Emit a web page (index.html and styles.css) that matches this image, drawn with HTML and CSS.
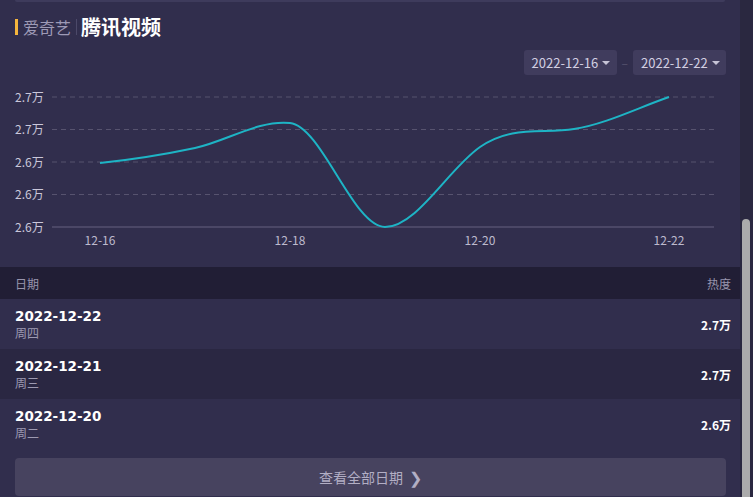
FILE: index.html
```html
<!DOCTYPE html>
<html lang="zh">
<head>
<meta charset="utf-8">
<link rel="stylesheet" href="styles.css">
</head>
<body>
<div class="page">
  <div class="main">
    <div class="prev-card"></div>
    <div class="title">
      <span class="mark"></span>
      <span class="tab">爱奇艺</span>
      <span class="sep"></span>
      <span class="tab active">腾讯视频</span>
    </div>
    <div class="pickers">
      <div class="picker">2022-12-16<span class="caret"></span></div>
      <span class="dash">–</span>
      <div class="picker">2022-12-22<span class="caret"></span></div>
    </div>
    <svg class="chart" width="740" height="192" viewBox="0 75 740 192">
      <g class="grid">
        <line x1="52" y1="97" x2="714" y2="97"/>
        <line x1="52" y1="129.5" x2="714" y2="129.5"/>
        <line x1="52" y1="162" x2="714" y2="162"/>
        <line x1="52" y1="194.5" x2="714" y2="194.5"/>
      </g>
      <line class="axis" x1="52" y1="227" x2="714" y2="227"/>
      <g class="ylab">
        <text x="15" y="101.5">2.7万</text>
        <text x="15" y="134">2.7万</text>
        <text x="15" y="166.5">2.6万</text>
        <text x="15" y="199">2.6万</text>
        <text x="15" y="231.5">2.6万</text>
      </g>
      <g class="xlab">
        <text x="100" y="245">12-16</text>
        <text x="290" y="245">12-18</text>
        <text x="480" y="245">12-20</text>
        <text x="669" y="245">12-22</text>
      </g>
      <path class="line" d="M100,163 C131.7,159.7 163.3,154.7 195,148 C226.7,141.3 258.3,119.7 290,123 C321.7,126.3 353.3,227 385,227 C416.7,227 448.3,169 480,147 C511.7,125 542.3,134 574,129 C605.7,124 637.3,108 669,97"/>
    </svg>
    <div class="table">
      <div class="thead">
        <span>日期</span>
        <span>热度</span>
      </div>
      <div class="row">
        <div class="date"><div class="d">2022-12-22</div><div class="w">周四</div></div>
        <div class="val">2.7万</div>
      </div>
      <div class="row alt">
        <div class="date"><div class="d">2022-12-21</div><div class="w">周三</div></div>
        <div class="val">2.7万</div>
      </div>
      <div class="row">
        <div class="date"><div class="d">2022-12-20</div><div class="w">周二</div></div>
        <div class="val">2.6万</div>
      </div>
    </div>
    <div class="more">查看全部日期 <span class="chev">❯</span></div>
  </div>
  <div class="scrollbar"><div class="thumb"></div></div>
</div>
</body>
</html>
```
FILE: styles.css
```css
* { box-sizing: border-box; }
html, body {
  margin: 0;
  padding: 0;
  background: #312e4d;
  overflow: hidden;
}
body {
  font-family: "Noto Sans CJK SC", "Noto Sans", sans-serif;
  color: #ffffff;
}
.page {
  display: flex;
  width: 753px;
  height: 497px;
  overflow: hidden;
}
.main {
  width: 740px;
  flex: none;
}
.prev-card {
  height: 2px;
  margin: 0 15px;
  background: #3e3b5c;
  border-radius: 0 0 3px 3px;
}
.title {
  display: flex;
  align-items: center;
  height: 22px;
  margin-top: 14px;
  padding-left: 15px;
}
.mark {
  width: 3px;
  height: 16px;
  background: #f5b53d;
  margin-right: 5px;
}
.tab {
  font-size: 16px;
  color: #9e9ab6;
  line-height: 22px;
}
.tab.active {
  font-size: 20px;
  font-weight: 700;
  color: #ffffff;
}
.sep {
  width: 1px;
  height: 16px;
  background: #4c4969;
  margin: 0 4px 0 5px;
}
.pickers {
  display: flex;
  justify-content: flex-end;
  align-items: center;
  margin-top: 12px;
  padding-right: 14px;
  height: 25px;
}
.picker {
  display: flex;
  align-items: center;
  justify-content: space-between;
  white-space: nowrap;
  height: 25px;
  padding: 0 8px;
  background: #403c5d;
  border-radius: 3px;
  font-size: 13px;
  line-height: 25px;
  color: #d2cfe2;
  width: 93px;
}
.caret {
  width: 0;
  height: 0;
  border-left: 4px solid transparent;
  border-right: 4px solid transparent;
  border-top: 4px solid #c6c3d6;
  margin-left: 4px;
}
.dash {
  color: #56536f;
  font-size: 12px;
  margin: 0 5px;
}
.chart {
  display: block;
}
.grid line {
  stroke: #57536f;
  stroke-width: 1;
  stroke-dasharray: 5 4;
}
.axis {
  stroke: #55516f;
  stroke-width: 1.5;
}
.ylab text {
  font-family: "Noto Sans CJK SC", "Noto Sans", sans-serif;
  font-size: 12px;
  fill: #cac7da;
}
.xlab text {
  font-family: "Noto Sans CJK SC", "Noto Sans", sans-serif;
  font-size: 12px;
  fill: #bdbacd;
  text-anchor: middle;
}
.line {
  fill: none;
  stroke: #1eb4c5;
  stroke-width: 2;
}
.thead {
  display: flex;
  justify-content: space-between;
  align-items: center;
  height: 32px;
  padding: 0 9px 0 15px;
  background: #211e35;
  font-size: 12px;
  color: #9895ad;
}
.row {
  display: flex;
  justify-content: space-between;
  align-items: center;
  height: 50px;
  padding: 0 9px 0 15px;
}
.row.alt {
  background: #2a2742;
}
.d {
  font-family: "DejaVu Sans", "Noto Sans CJK SC", sans-serif;
  font-size: 13.5px;
  font-weight: 700;
  line-height: 17px;
  color: #ffffff;
}
.w {
  font-size: 12px;
  line-height: 16px;
  color: #9d9ab2;
}
.val {
  font-size: 12px;
  font-weight: 700;
  color: #ffffff;
}
.more {
  display: flex;
  justify-content: center;
  align-items: center;
  margin: 9px 14px 0 15px;
  height: 38px;
  background: #47435f;
  border-radius: 4px;
  font-size: 14px;
  color: #b2aec4;
}
.chev {
  margin-left: 6px;
  font-size: 16px;
}
.scrollbar {
  width: 13px;
  flex: none;
  background: #2a2840;
  padding: 219px 3px 0 2px;
}
.thumb {
  width: 8px;
  height: 290px;
  background: #ababab;
  border-radius: 4px;
}
```
